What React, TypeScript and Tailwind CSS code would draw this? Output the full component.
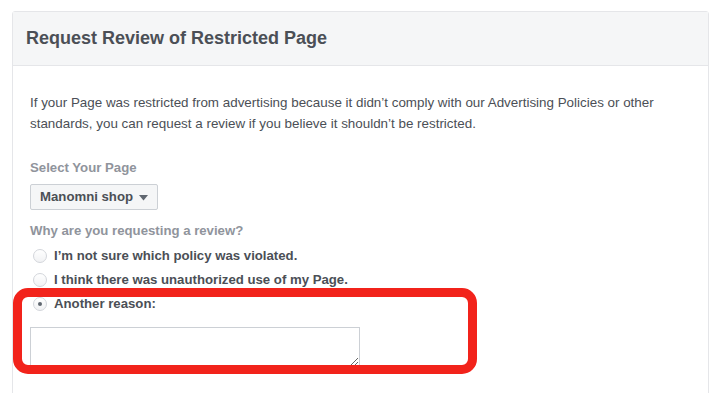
const reasons = [
  { label: "I’m not sure which policy was violated.", checked: false },
  { label: 'I think there was unauthorized use of my Page.', checked: false },
  { label: 'Another reason:', checked: true },
];

function Radio({ checked }: { checked: boolean }) {
  return (
    <span className="ml-[3px] flex h-[14px] w-[14px] shrink-0 items-center justify-center rounded-full border border-[#d3d6db] bg-gradient-to-b from-white to-[#f1f2f4]">
      {checked && <span className="h-[4px] w-[4px] rounded-full bg-[#606770]" />}
    </span>
  );
}

export default function App() {
  return (
    <div
      className="relative h-[393px] w-[720px] overflow-hidden bg-white pl-[12px] pr-[11px] pt-[11px]"
      style={{ fontFamily: '"Liberation Sans", Arial, sans-serif' }}
    >
      <div className="h-[400px] rounded-t-[3px] border border-[#e5e6e9]">
        <div className="flex h-[54px] items-center border-b border-[#e5e6e9] bg-[#f5f6f7] px-[13px]">
          <h1 className="text-[18px] font-bold text-[#4b4f56]">Request Review of Restricted Page</h1>
        </div>

        <div className="px-[17px] pt-[26px]">
          <p className="text-[13.4px] leading-[21px] text-[#4b4f56]">
            If your Page was restricted from advertising because it didn’t comply with our Advertising Policies or other
            <br />
            standards, you can request a review if you believe it shouldn’t be restricted.
          </p>

          <div className="mt-[25px] text-[13.2px] font-bold leading-[18px] text-[#90949c]">Select Your Page</div>
          <button className="mt-[7px] flex h-[26px] items-center gap-[6px] rounded-[2px] border border-[#ccd0d5] bg-[#f5f6f7] px-[9px] text-[13.2px] font-bold text-[#4b4f56]">
            Manomni shop
            <svg width="9" height="6" viewBox="0 0 9 6" className="mt-[1px]">
              <path d="M0 0h9L4.5 5.5z" fill="#606770" />
            </svg>
          </button>

          <div className="mt-[12px] text-[13.2px] font-bold leading-[18px] text-[#90949c]">Why are you requesting a review?</div>
          <div className="mt-[4px] flex flex-col">
            {reasons.map((r) => (
              <label key={r.label} className="flex h-[24px] items-center gap-[7px] text-[13.2px] font-bold text-[#4b4f56]">
                <Radio checked={r.checked} />
                {r.label}
              </label>
            ))}
          </div>
          <textarea className="mt-[11px] block h-[40px] w-[330px] border border-[#ccd0d5] bg-white outline-none" />
        </div>
      </div>

      {/* red annotation box */}
      <div className="absolute left-[13px] top-[288px] h-[86px] w-[464px] rounded-[15px] border-[9px] border-[#f2231b]" />
    </div>
  );
}
